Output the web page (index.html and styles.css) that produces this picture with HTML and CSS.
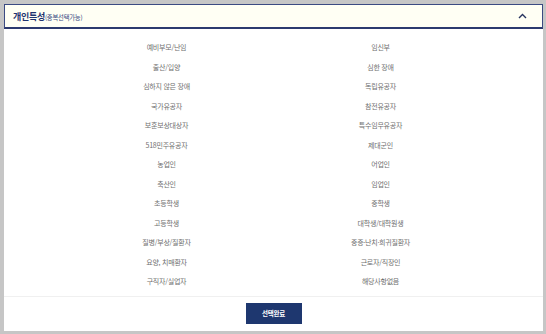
FILE: index.html
```html
<!DOCTYPE html>
<html lang="ko">
<head>
  <meta charset="UTF-8" />
  <meta name="viewport" content="width=device-width, initial-scale=1.0"/>
  <title>개인특성</title>
  <link rel="stylesheet" href="styles.css">
</head>
<body>

  <div class="panel">
    <div class="panel-head">
      <h2>개인특성<span class="sub">(중복선택가능)</span></h2>
      <svg class="chevron" width="9" height="6" viewBox="0 0 9 6">
        <path d="M1 5 L4.5 1.5 L8 5" fill="none" stroke="#26335e" stroke-width="1.4"/>
      </svg>
    </div>

    <ul class="trait-list">
      <li>예비부모/난임</li>
      <li>임신부</li>
      <li>출산/입양</li>
      <li>심한 장애</li>
      <li>심하지 않은 장애</li>
      <li>독립유공자</li>
      <li>국가유공자</li>
      <li>참전유공자</li>
      <li>보훈보상대상자</li>
      <li>특수임무유공자</li>
      <li>518민주유공자</li>
      <li>제대군인</li>
      <li>농업인</li>
      <li>어업인</li>
      <li>축산인</li>
      <li>임업인</li>
      <li>초등학생</li>
      <li>중학생</li>
      <li>고등학생</li>
      <li>대학생/대학원생</li>
      <li>질병/부상/질환자</li>
      <li>중증·난치·희귀질환자</li>
      <li>요양, 치매환자</li>
      <li>근로자/직장인</li>
      <li>구직자/실업자</li>
      <li>해당사항없음</li>
    </ul>

    <div class="panel-foot">
      <button class="done-btn">선택완료</button>
    </div>
  </div>

</body>
</html>
```

FILE: styles.css
```css
body {
  margin: 0;
  background-color: #c6c6c6;
  font-family: "Noto Sans CJK KR", "Noto Sans", sans-serif;
  height: 334px;
  overflow: hidden;
}

.panel {
  margin: 4px 3px 3px 4px;
  background: #fff;
  height: 327px;
  display: flex;
  flex-direction: column;
}

.panel-head {
  height: 22px;
  background-color: #fffff4;
  border: 1px solid #3b4a82;
  border-bottom: 2px solid #2c3a6e;
  display: flex;
  align-items: center;
  justify-content: space-between;
  padding: 0 15px 0 8px;
}

.panel-head h2 {
  margin: 0;
  font-size: 9px;
  font-weight: bold;
  color: #1f3470;
  letter-spacing: -0.3px;
}

.panel-head .sub {
  font-size: 6.3px;
  font-weight: normal;
  color: #3b4a82;
  letter-spacing: -0.2px;
}

.chevron {
  display: block;
}

.trait-list {
  list-style: none;
  margin: 0 auto;
  padding: 9px 0 4px;
  width: 428px;
  display: grid;
  grid-template-columns: 1fr 1fr;
  grid-auto-rows: 19.5px;
}

.trait-list li {
  text-align: center;
  font-size: 7px;
  line-height: 19.5px;
  color: #707070;
  letter-spacing: -0.25px;
}

.panel-foot {
  border-top: 1px solid #f0f0f0;
  display: flex;
  justify-content: center;
  padding-top: 6px;
}

.done-btn {
  width: 56px;
  height: 21px;
  border: none;
  background-color: #1e376f;
  color: #fff;
  font-family: inherit;
  font-size: 6.5px;
  font-weight: bold;
  letter-spacing: -0.2px;
  padding: 0;
}
```
